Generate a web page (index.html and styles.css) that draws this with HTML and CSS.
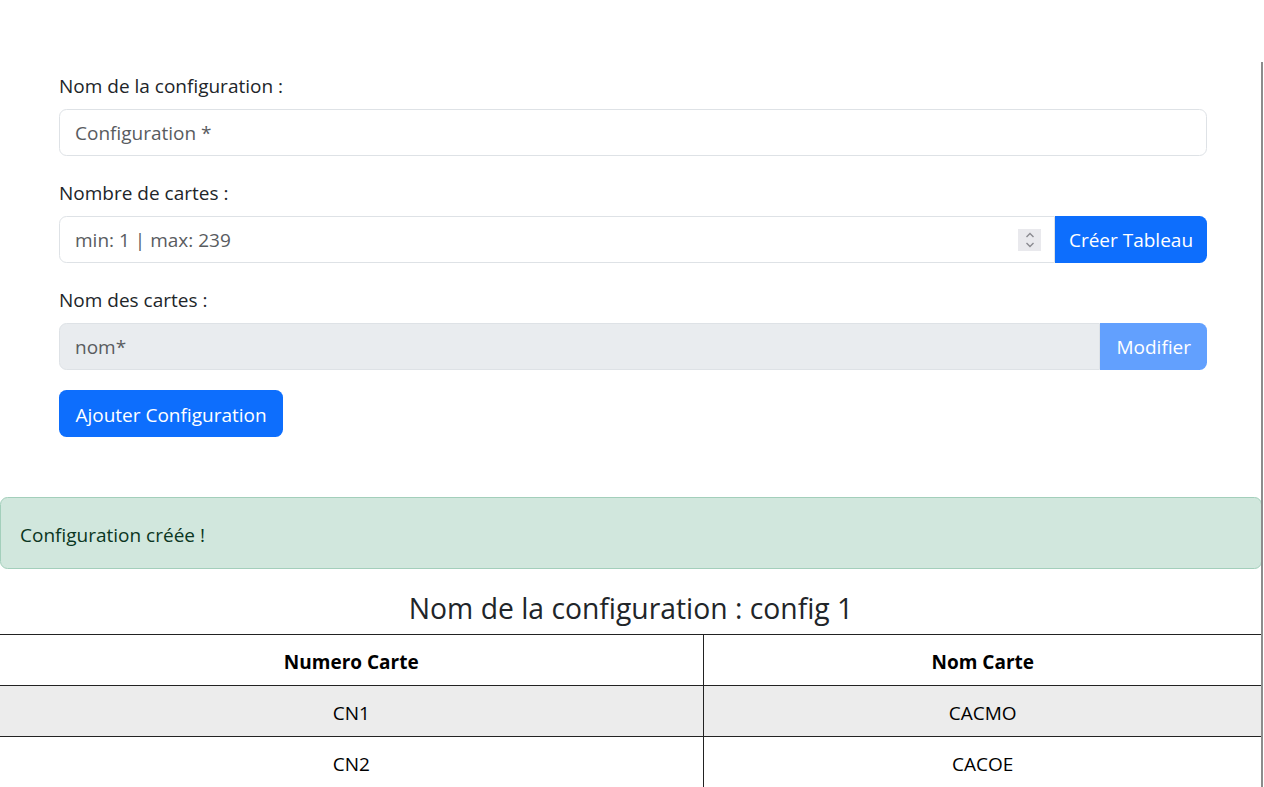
FILE: index.html
```html
<!DOCTYPE html>
<html lang="fr">
<head>
<meta charset="utf-8">
<title>Configuration</title>
<link rel="stylesheet" href="styles.css">
</head>
<body>
<div class="page">
  <form class="config-form">
    <div class="field">
      <label class="form-label">Nom de la configuration :</label>
      <div class="form-control"><span class="placeholder">Configuration *</span></div>
    </div>
    <div class="field">
      <label class="form-label">Nombre de cartes :</label>
      <div class="input-group">
        <div class="form-control grow">
          <span class="placeholder">min: 1 | max: 239</span>
          <span class="spin">
            <svg width="12" height="18" viewBox="0 0 12 18"><path d="M2.5 6 L6 2.5 L9.5 6" fill="none" stroke="#8a8a90" stroke-width="1.4"/><path d="M2.5 12 L6 15.5 L9.5 12" fill="none" stroke="#8a8a90" stroke-width="1.4"/></svg>
          </span>
        </div>
        <span class="btn btn-primary btn-end btn-create">Créer Tableau</span>
      </div>
    </div>
    <div class="field last">
      <label class="form-label">Nom des cartes :</label>
      <div class="input-group">
        <div class="form-control grow disabled"><span class="placeholder">nom*</span></div>
        <span class="btn btn-primary btn-end btn-disabled">Modifier</span>
      </div>
    </div>
    <span class="btn btn-primary btn-add">Ajouter Configuration</span>
  </form>

  <div class="alert">Configuration créée !</div>

  <h4 class="config-title">Nom de la configuration : config 1</h4>

  <table class="cards">
    <thead>
      <tr><th>Numero Carte</th><th>Nom Carte</th></tr>
    </thead>
    <tbody>
      <tr class="shaded"><td>CN1</td><td>CACMO</td></tr>
      <tr><td>CN2</td><td>CACOE</td></tr>
    </tbody>
  </table>
</div>
<div class="edge-line"></div>
</body>
</html>
```

FILE: styles.css
```css
html, body {
  margin: 0;
  padding: 0;
  background: #fff;
}
body {
  font-family: "Open Sans", "Noto Sans", "Liberation Sans", sans-serif;
  font-size: 19px;
  color: #212529;
  overflow: hidden;
  height: 787px;
}
.page {
  width: 1262px;
}
.config-form {
  padding: 71px 0 0 59px;
  width: 1148px;
}
.field {
  margin-bottom: 22px;
}
.field.last {
  margin-bottom: 20px;
}
.form-label {
  display: block;
  line-height: 30px;
  margin-bottom: 8px;
}
.form-control {
  box-sizing: border-box;
  height: 47px;
  border: 1px solid #dee2e6;
  border-radius: 7.5px;
  padding: 1px 15px 0;
  display: flex;
  align-items: center;
  background: #fff;
}
.placeholder {
  color: #595c5f;
}
.input-group {
  display: flex;
}
.grow {
  flex: 1;
  border-radius: 7.5px 0 0 7.5px;
  padding-right: 13px;
}
.disabled {
  background: #e9ecef;
}
.spin {
  margin-left: auto;
  width: 23px;
  height: 22px;
  background: #e9e9ed;
  display: flex;
  align-items: center;
  justify-content: center;
}
.btn {
  box-sizing: border-box;
  display: inline-flex;
  align-items: center;
  justify-content: center;
  height: 47px;
  padding: 1px 15px 0;
  border-radius: 7.5px;
  color: #fff;
  white-space: nowrap;
}
.btn-primary {
  background: #0d6efd;
}
.btn-end {
  border-radius: 0 7.5px 7.5px 0;
  padding: 1px 16px 0;
}
.btn-create {
  width: 152px;
}
.btn-add {
  width: 224px;
  padding-top: 2px;
}
.btn-disabled {
  background: #62a0fe;
}
.alert {
  box-sizing: border-box;
  margin-top: 60px;
  height: 72px;
  border: 1px solid #a3cfbb;
  background: #d1e7dd;
  color: #0a3622;
  border-radius: 7.5px;
  padding: 3px 19px 0;
  display: flex;
  align-items: center;
}
.config-title {
  margin: 21px 0 8px;
  font-size: 28.3px;
  font-weight: 400;
  line-height: 36px;
  text-align: center;
  color: #212529;
}
.cards {
  width: 100%;
  border-collapse: collapse;
  color: #000;
}
.cards th, .cards td {
  height: 51px;
  box-sizing: border-box;
  padding: 3px 0 0;
  text-align: center;
  border-top: 1px solid #222;
  border-bottom: 1px solid #222;
}
.cards th:first-child, .cards td:first-child {
  width: 703px;
  border-right: 1px solid #222;
}
.cards th {
  font-weight: 700;
}
.shaded td {
  background: #ececec;
}
.edge-line {
  position: absolute;
  left: 1261px;
  top: 62px;
  width: 2px;
  height: 725px;
  background: #8c8c8c;
}
```
